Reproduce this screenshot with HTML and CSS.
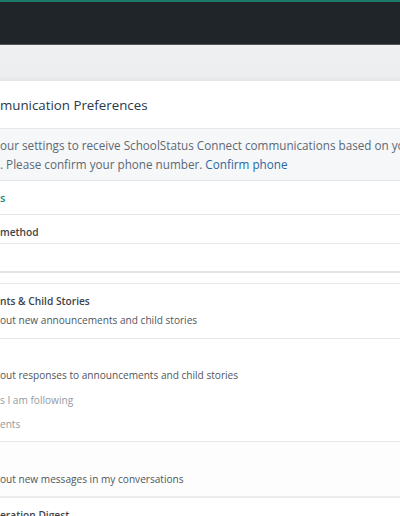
FILE: index.html
```html
<!DOCTYPE html>
<html lang="en">
<head>
<meta charset="utf-8">
<title>Communication Preferences</title>
<link rel="stylesheet" href="styles.css">
</head>
<body>
<header class="topbar"></header>
<div class="subbar"></div>
<main class="card">
  <h1 class="title"><span class="txt"><span class="pre">Com</span><span>munication Preferences</span></span></h1>
  <div class="notice">
    <div class="txt"><span class="pre">Update y</span><span>our settings to receive SchoolStatus Connect communications based on your preferred</span></div>
    <div class="txt"><span class="pre">methods</span><span>. Please confirm your phone number. <a class="link" href="#">Confirm phone</a></span></div>
  </div>
  <div class="tabs"><div class="txt tab"><span class="pre">Notification</span><span>s</span></div></div>
  <div class="field">
    <div class="txt field-label"><span class="pre">Delivery </span><span>method</span></div>
    <div class="select"></div>
  </div>
  <section class="group">
    <div class="row">
      <div class="txt label"><span class="pre">Announceme</span><span>nts &amp; Child Stories</span></div>
      <div class="txt desc"><span class="pre">Notify me ab</span><span>out new announcements and child stories</span></div>
    </div>
    <div class="row row-options">
      <div class="txt label"><span class="pre">Responses</span><span></span></div>
      <div class="txt desc"><span class="pre">Notify me ab</span><span>out responses to announcements and child stories</span></div>
      <div class="options">
        <div class="txt option"><span class="pre">Only for storie</span><span>s I am following</span></div>
        <div class="txt option"><span class="pre">For all announcem</span><span>ents</span></div>
      </div>
    </div>
    <div class="row row-alt">
      <div class="txt label"><span class="pre">Messages</span><span></span></div>
      <div class="txt desc"><span class="pre">Notify me ab</span><span>out new messages in my conversations</span></div>
    </div>
    <div class="row">
      <div class="txt label"><span class="pre">Mod</span><span>eration Digest</span></div>
    </div>
  </section>
</main>
</body>
</html>
```
FILE: styles.css
```css
html, body {
  margin: 0;
  padding: 0;
  background: #ffffff;
}
body {
  width: 400px;
  height: 516px;
  overflow: hidden;
  font-family: "Open Sans", "Noto Sans", sans-serif;
}
.topbar {
  height: 42px;
  background: #1f2528;
  border-top: 2px solid #1c7b68;
  border-bottom: 1px solid #50565a;
}
.subbar {
  height: 36px;
  background: linear-gradient(#eef0f2, #eceef0 85%, #e4e6e9);
}
.card {
  background: #ffffff;
}
.txt {
  display: flex;
  margin-left: -300px;
  white-space: nowrap;
}
.pre {
  flex: 0 0 300px;
  text-align: right;
  overflow: hidden;
}
.title {
  margin: 0;
  height: 47px;
  display: flex;
  align-items: center;
  font-size: 13.3px;
  font-weight: 400;
  color: #2a384c;
  border-bottom: 1px solid #e6e9ec;
}
.notice {
  background: #f5f7f9;
  padding: 7px 0 6px;
  font-size: 11.7px;
  line-height: 19px;
  color: #5d6873;
  border-bottom: 1px solid #e4e7ea;
}
.link {
  color: #2b679f;
  text-decoration: none;
}
.tabs {
  height: 33px;
  display: flex;
  align-items: center;
  border-bottom: 1px solid #e6e9ec;
}
.tab {
  font-size: 11px;
  font-weight: 600;
  color: #178a80;
}
.field-label {
  height: 28px;
  align-items: center;
  padding-top: 5px;
  box-sizing: border-box;
  font-size: 10.2px;
  font-weight: 600;
  color: #3d4349;
}
.select {
  height: 27px;
  border-top: 1px solid #e6e8eb;
  border-bottom: 2px solid #e2e4e7;
}
.group {
  margin-top: 10px;
  border-top: 1px solid #e6e8eb;
}
.row {
  padding: 8px 0 8px;
  border-bottom: 1px solid #e6e8eb;
  font-size: 10.2px;
  line-height: 19px;
}
.row-options {
  padding-bottom: 5px;
}
.row-alt {
  padding-top: 9px;
  padding-bottom: 7px;
  background: #fdfdfd;
  border-bottom: 2px solid #ececec;
}
.label {
  font-weight: 600;
  color: #3d4349;
}
.desc {
  font-size: 10.1px;
  color: #50565c;
}
.options {
  padding-top: 3px;
}
.option {
  font-size: 10.1px;
  line-height: 24px;
  color: #95999e;
}
```
